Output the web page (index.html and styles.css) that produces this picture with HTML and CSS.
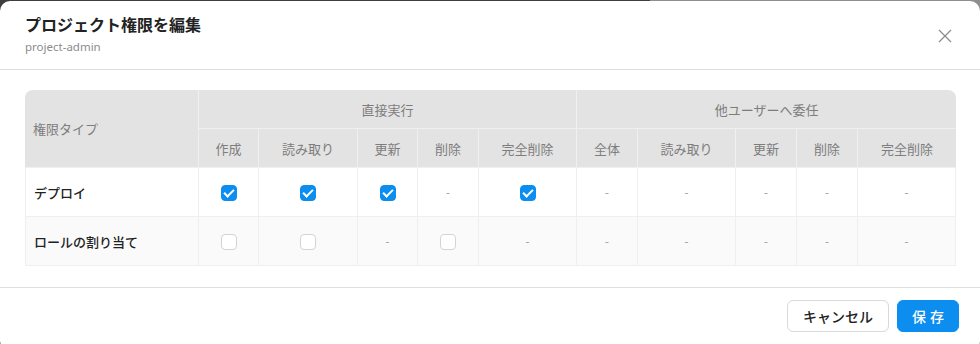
FILE: index.html
```html
<!DOCTYPE html>
<html lang="ja">

<head>
    <meta charset="UTF-8">
    <meta name="viewport" content="width=device-width, initial-scale=1.0">
    <title>プロジェクト権限を編集</title>
    <link rel="stylesheet" href="styles.css">
</head>

<body>

    <div class="modal">
        <div class="modal-header">
            <div>
                <h1 class="modal-title">プロジェクト権限を編集</h1>
                <div class="modal-sub">project-admin</div>
            </div>
            <span class="close">
                <svg width="14" height="14" viewBox="0 0 14 14"><path d="M1 1L13 13M13 1L1 13" stroke="#8c8c8c" stroke-width="1.3" fill="none"/></svg>
            </span>
        </div>

        <div class="modal-body">
            <table class="perm-table">
                <colgroup>
                    <col style="width:174px">
                    <col style="width:60px">
                    <col style="width:99px">
                    <col style="width:60px">
                    <col style="width:61px">
                    <col style="width:98px">
                    <col style="width:61px">
                    <col style="width:98px">
                    <col style="width:61px">
                    <col style="width:61px">
                    <col style="width:98px">
                </colgroup>
                <thead>
                    <tr>
                        <th rowspan="2" class="type-head">権限タイプ</th>
                        <th colspan="5">直接実行</th>
                        <th colspan="5" class="last">他ユーザーへ委任</th>
                    </tr>
                    <tr>
                        <th>作成</th>
                        <th>読み取り</th>
                        <th>更新</th>
                        <th>削除</th>
                        <th>完全削除</th>
                        <th>全体</th>
                        <th>読み取り</th>
                        <th>更新</th>
                        <th>削除</th>
                        <th class="last">完全削除</th>
                    </tr>
                </thead>
                <tbody>
                    <tr>
                        <td class="name">デプロイ</td>
                        <td><span class="check on"></span></td>
                        <td><span class="check on"></span></td>
                        <td><span class="check on"></span></td>
                        <td class="dash">-</td>
                        <td><span class="check on"></span></td>
                        <td class="dash">-</td>
                        <td class="dash">-</td>
                        <td class="dash">-</td>
                        <td class="dash">-</td>
                        <td class="dash">-</td>
                    </tr>
                    <tr class="alt">
                        <td class="name">ロールの割り当て</td>
                        <td><span class="check"></span></td>
                        <td><span class="check"></span></td>
                        <td class="dash">-</td>
                        <td><span class="check"></span></td>
                        <td class="dash">-</td>
                        <td class="dash">-</td>
                        <td class="dash">-</td>
                        <td class="dash">-</td>
                        <td class="dash">-</td>
                        <td class="dash">-</td>
                    </tr>
                </tbody>
            </table>
        </div>

        <div class="modal-footer">
            <button class="btn">キャンセル</button>
            <button class="btn primary">保存</button>
        </div>
    </div>

</body>

</html>
```

FILE: styles.css
```css
body {
    margin: 0;
    padding: 1px 0 0;
    font-family: 'Noto Sans', 'Noto Sans CJK JP', sans-serif;
    background: linear-gradient(to right, #3e3e3e 650px, #8e8e8e 650px);
    overflow: hidden;
}

.modal {
    width: 980px;
    height: 350px;
    background-color: #fff;
    border-radius: 10px;
    box-sizing: border-box;
}

.modal-header {
    display: flex;
    justify-content: space-between;
    align-items: center;
    padding: 12px 28px 13px 25px;
    border-bottom: 1px solid #dedede;
}

.modal-title {
    margin: 0;
    font-size: 16px;
    line-height: 24px;
    font-weight: 700;
    color: #222;
}

.modal-sub {
    font-size: 11.5px;
    line-height: 19px;
    color: #8c8c8c;
}

.close {
    display: flex;
    cursor: pointer;
    margin-top: 2px;
}

.modal-body {
    padding: 20px 0 21px 25px;
    border-bottom: 1px solid #dedede;
}

.perm-table {
    width: 931px;
    table-layout: fixed;
    border-collapse: separate;
    border-spacing: 0;
    font-size: 13px;
}

.perm-table th {
    background-color: #e3e3e3;
    color: #7d7d7d;
    font-weight: 400;
    height: 38px;
    padding: 0;
    text-align: center;
    border-right: 1px solid #f0f0f0;
    border-bottom: 1px solid #f0f0f0;
}

.perm-table th.last {
    border-right: none;
}

.perm-table thead tr:first-child th:first-child {
    border-top-left-radius: 8px;
}

.perm-table thead tr:first-child th:last-child {
    border-top-right-radius: 8px;
}

.perm-table th.type-head {
    text-align: left;
    padding-left: 8px;
}

.perm-table td {
    height: 48px;
    padding: 0;
    text-align: center;
    border-right: 1px solid #efefef;
    border-bottom: 1px solid #efefef;
}

.perm-table td:first-child {
    border-left: 1px solid #efefef;
}

.perm-table td.name {
    text-align: left;
    padding-left: 8px;
    font-weight: 500;
    color: #222;
}

.perm-table td.dash {
    color: #a6a6a6;
    font-size: 12px;
}

.perm-table tr.alt td {
    background-color: #fafafa;
}

.check {
    display: inline-block;
    width: 16px;
    height: 16px;
    box-sizing: border-box;
    border: 1px solid #d4d4d4;
    border-radius: 4px;
    background-color: #fff;
    vertical-align: middle;
    position: relative;
}

.check.on {
    background-color: #0b8ef0;
    border-color: #0b8ef0;
}

.check.on::after {
    content: '';
    position: absolute;
    left: 4px;
    top: 1px;
    width: 4px;
    height: 8px;
    border: solid #fff;
    border-width: 0 2px 2px 0;
    transform: rotate(45deg);
}

.modal-footer {
    display: flex;
    justify-content: flex-end;
    gap: 8px;
    padding: 12px 21px;
}

.btn {
    height: 32px;
    padding: 0 15px;
    font-family: inherit;
    font-size: 14px;
    font-weight: 500;
    color: #222;
    background-color: #fff;
    border: 1px solid #d9d9d9;
    border-radius: 6px;
    cursor: pointer;
}

.btn:first-child {
    width: 102px;
}

.btn.primary {
    width: 62px;
    color: #fff;
    background-color: #0b8ef0;
    border-color: #0b8ef0;
    letter-spacing: 4px;
    padding: 0 0 0 4px;
}
```
